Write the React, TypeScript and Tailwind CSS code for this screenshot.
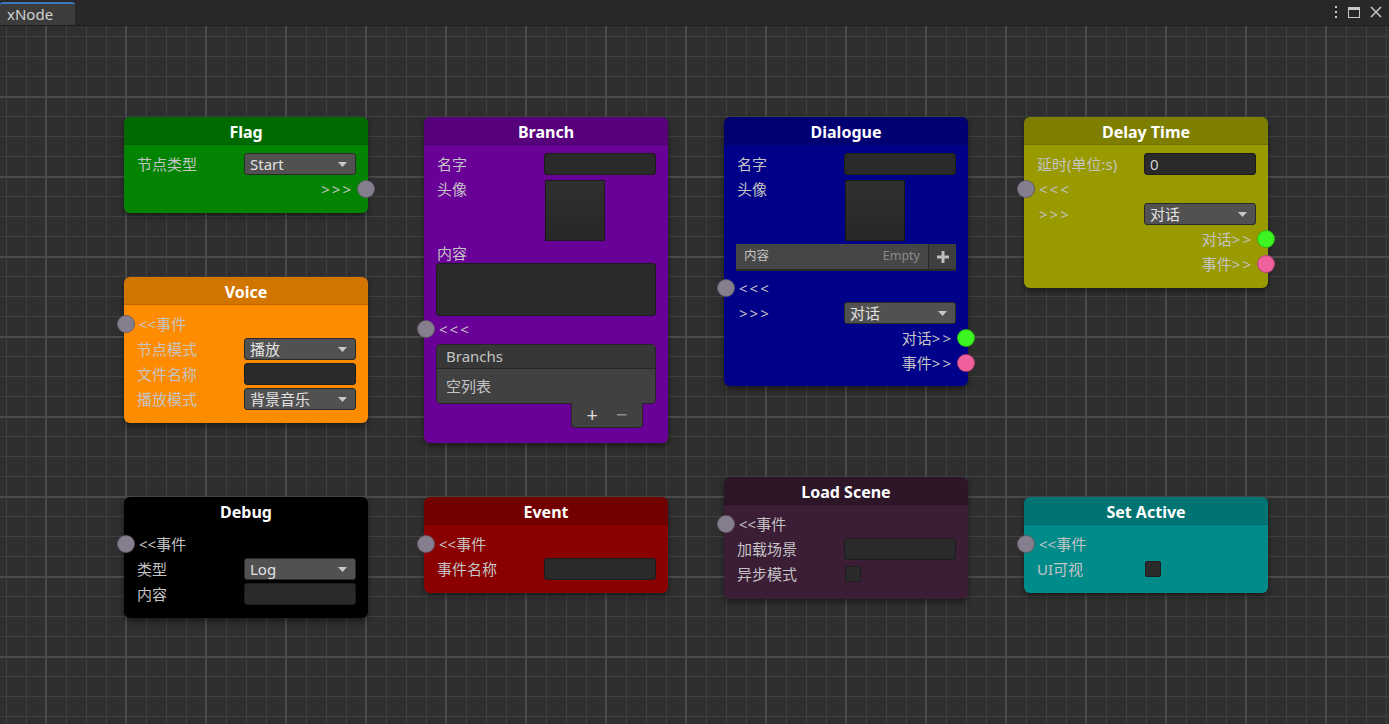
import type { ReactNode } from "react";

const FONT = "font-['Noto_Sans','Noto_Sans_CJK_SC',sans-serif]";

function Port({ side, color = "bg-[#857e8f]" }: { side: "left" | "right"; color?: string }) {
  return (
    <span
      className={`absolute top-1/2 -translate-y-1/2 w-[18px] h-[18px] rounded-full border border-black/25 ${color} ${
        side === "left" ? "left-[-7px]" : "right-[-7px]"
      }`}
    />
  );
}

function Row({ children, className = "" }: { children: ReactNode; className?: string }) {
  return <div className={`relative h-[22px] flex items-center pl-[13px] pr-[12px] ${className}`}>{children}</div>;
}

function Label({ children }: { children: ReactNode }) {
  return <span className="flex-1 text-[15px] leading-none text-[#c4c4c4] whitespace-nowrap">{children}</span>;
}

function Field({ value }: { value?: string }) {
  return (
    <div className="w-[112px] h-[22px] rounded-[3px] bg-[#2a2a2a] border border-[#1d1d1d] flex items-center pl-[5px] text-[15px] leading-none text-[#d2d2d2]">
      {value}
    </div>
  );
}

function Dropdown({ value }: { value: string }) {
  return (
    <div className="w-[112px] h-[22px] rounded-[3px] bg-[#515151] border border-[#2a2a2a] flex items-center pl-[5px] pr-[8px] text-[15px] leading-none text-[#e2e2e2]">
      <span className="flex-1">{value}</span>
      <svg width="9" height="5" viewBox="0 0 9 5">
        <path d="M0 0h9L4.5 5z" fill="#c8c8c8" />
      </svg>
    </div>
  );
}

function Check() {
  return <div className="w-[16px] h-[16px] ml-[1px] rounded-[2px] bg-[#2a2a2a] border border-[#1d1d1d]" />;
}

function Avatar() {
  return <div className="w-[60px] h-[61px] ml-[1px] mt-[2px] self-start bg-[linear-gradient(to_bottom,#303030,#272727)] border border-black/40" />;
}

function Value({ children }: { children: ReactNode }) {
  return <div className="w-[112px] flex">{children}</div>;
}

function InPort({ text, className = "" }: { text: ReactNode; className?: string }) {
  return (
    <Row className={`pl-[15px] ${className}`}>
      <Port side="left" />
      <Label>{text}</Label>
    </Row>
  );
}

function OutPort({ text, color }: { text: string; color?: string }) {
  return (
    <Row className="justify-end pr-[15px]">
      <span className="text-[15px] leading-none text-[#c4c4c4] whitespace-nowrap">
        {text}
        <span className="tracking-[2px]">{">>"}</span>
      </span>
      <Port side="right" color={color} />
    </Row>
  );
}

function Node({
  pos,
  title,
  head,
  body,
  pb = "pb-[13px]",
  children,
}: {
  pos: string;
  title: string;
  head: string;
  body: string;
  pb?: string;
  children: ReactNode;
}) {
  return (
    <div className={`absolute w-[244px] rounded-[6px] shadow-[0_3px_6px_rgba(0,0,0,0.45)] ${pos}`}>
      <div className={`h-[28px] pt-[3px] rounded-t-[6px] flex items-center justify-center text-[16px] leading-none font-bold text-white border-b border-black/10 ${head}`}>
        {title}
      </div>
      <div className={`rounded-b-[6px] pt-[8px] flex flex-col gap-[3px] ${pb} ${body}`}>{children}</div>
    </div>
  );
}

const GREEN = "bg-[#3df520]";
const PINK = "bg-[#f0609c]";
const ARR3 = <span className="tracking-[2px]">{">>>"}</span>;
const ARL3 = <span className="tracking-[2px]">{"<<<"}</span>;

export default function App() {
  return (
    <div className={`w-[1389px] h-[724px] flex flex-col bg-[#282828] overflow-hidden ${FONT}`}>
      <div className="h-[26px] flex items-end bg-[#282828] border-b border-[#1e1e1e]">
        <div className="h-[23px] w-[75px] bg-[#3c3c3c] border-t-2 border-[#3a78c0] rounded-t-[3px] px-[7px] flex items-center text-[15px] text-[#d2d2d2]">
          xNode
        </div>
        <div className="ml-auto h-[26px] flex items-center gap-[10px] pr-[7px]">
          <svg width="4" height="12" viewBox="0 0 4 12">
            <rect x="1" y="0" width="2" height="2" fill="#c8c8c8" />
            <rect x="1" y="5" width="2" height="2" fill="#c8c8c8" />
            <rect x="1" y="10" width="2" height="2" fill="#c8c8c8" />
          </svg>
          <svg width="12" height="11" viewBox="0 0 12 11">
            <rect x="0.5" y="0.5" width="11" height="10" fill="none" stroke="#c8c8c8" />
            <rect x="0.5" y="0.5" width="11" height="2.5" fill="#c8c8c8" />
          </svg>
          <svg width="12" height="12" viewBox="0 0 12 12">
            <path d="M1 1l10 10M11 1L1 11" stroke="#c8c8c8" strokeWidth="1.5" />
          </svg>
        </div>
      </div>

      <div className="relative flex-1 bg-[#2f2f2f] bg-[image:linear-gradient(to_right,#4a4a4a_2px,transparent_2px),linear-gradient(to_bottom,#4a4a4a_2px,transparent_2px),linear-gradient(to_right,#404040_1px,transparent_1px),linear-gradient(to_bottom,#404040_1px,transparent_1px)] bg-[size:80px_80px,80px_80px,20px_20px,20px_20px] bg-[position:45px_70px,45px_70px,6px_10px,6px_10px]">
        {/* column 1 */}
        <Node pos="left-[124px] top-[91px]" title="Flag" head="bg-[#006900]" body="bg-[#028402]">
          <Row>
            <Label>节点类型</Label>
            <Dropdown value="Start" />
          </Row>
          <Row className="justify-end pr-[15px]">
            <span className="text-[15px] leading-none text-[#c4c4c4]">{ARR3}</span>
            <Port side="right" />
          </Row>
        </Node>

        <Node pos="left-[124px] top-[251px]" title="Voice" head="bg-[#d27400]" body="bg-[#ff8c00]">
          <InPort text="<<事件" />
          <Row>
            <Label>节点模式</Label>
            <Dropdown value="播放" />
          </Row>
          <Row>
            <Label>文件名称</Label>
            <Field />
          </Row>
          <Row>
            <Label>播放模式</Label>
            <Dropdown value="背景音乐" />
          </Row>
        </Node>

        <Node pos="left-[124px] top-[471px]" title="Debug" head="bg-[#000000]" body="bg-[#000000]">
          <InPort text="<<事件" />
          <Row>
            <Label>类型</Label>
            <Dropdown value="Log" />
          </Row>
          <Row>
            <Label>内容</Label>
            <Field />
          </Row>
        </Node>

        {/* column 2 */}
        <Node pos="left-[424px] top-[91px]" title="Branch" head="bg-[#56007b]" body="bg-[#690098]" pb="pb-[15px]">
          <Row>
            <Label>名字</Label>
            <Field />
          </Row>
          <div className="relative h-[63px] flex pl-[13px] pr-[12px]">
            <span className="flex-1 text-[15px] leading-[22px] text-[#c4c4c4]">头像</span>
            <Value>
              <Avatar />
            </Value>
          </div>
          <div className="h-[20px] -mt-[1px] flex items-center pl-[13px] text-[15px] leading-none text-[#c4c4c4]">内容</div>
          <div className="mx-[12px] -mt-[3px] h-[53px] rounded-[3px] bg-[#2a2a2a] border border-[#1d1d1d]" />
          <InPort text={ARL3} className="-mt-[1px]" />
          <div className="mx-[12px] mt-[1px] flex flex-col">
            <div className="h-[60px] rounded-[4px] border border-[#262626] overflow-hidden flex flex-col">
              <div className="h-[24px] bg-[#373737] border-b border-[#262626] flex items-center pl-[9px] text-[15px] leading-none text-[#c4c4c4]">
                Branchs
              </div>
              <div className="flex-1 bg-[#414141] flex items-center pl-[9px] text-[15px] leading-none text-[#c4c4c4]">
                空列表
              </div>
            </div>
            <div className="self-end mr-[13px] -mt-[1px] w-[72px] h-[25px] rounded-b-[4px] bg-[#414141] border border-t-0 border-[#262626] flex items-center justify-center gap-[18px]">
              <span className="text-[20px] leading-none text-[#dcdcdc]">+</span>
              <span className="text-[20px] leading-none text-[#8c8c8c]">−</span>
            </div>
          </div>
        </Node>

        <Node pos="left-[424px] top-[471px]" title="Event" head="bg-[#720000]" body="bg-[#8b0000]">
          <InPort text="<<事件" />
          <Row>
            <Label>事件名称</Label>
            <Field />
          </Row>
        </Node>

        {/* column 3 */}
        <Node pos="left-[724px] top-[91px]" title="Dialogue" head="bg-[#000072]" body="bg-[#000088]" pb="pb-[12px]">
          <Row>
            <Label>名字</Label>
            <Field />
          </Row>
          <div className="relative h-[63px] flex pl-[13px] pr-[12px]">
            <span className="flex-1 text-[15px] leading-[22px] text-[#c4c4c4]">头像</span>
            <Value>
              <Avatar />
            </Value>
          </div>
          <div className="mx-[12px] h-[27px] flex bg-[#464646] border-b-2 border-[#2a2a2a]">
            <span className="flex-1 flex items-center pl-[8px] text-[12.5px] leading-none text-[#c4c4c4]">内容</span>
            <span className="flex items-center pr-[8px] text-[12.5px] leading-none text-[#8a8a8a]">Empty</span>
            <span className="w-[28px] flex items-center justify-center bg-[#3f3f3f] border-l border-[#2a2a2a]">
              <svg width="12" height="12" viewBox="0 0 12 12">
                <path d="M6 0v12M0 6h12" stroke="#bdbdbd" strokeWidth="3" />
              </svg>
            </span>
          </div>
          <InPort text={ARL3} className="mt-[3px]" />
          <Row className="pl-[15px]">
            <Label>{ARR3}</Label>
            <Dropdown value="对话" />
          </Row>
          <OutPort text="对话" color={GREEN} />
          <OutPort text="事件" color={PINK} />
        </Node>

        <Node pos="left-[724px] top-[451px]" title="Load Scene" head="bg-[#2e1629]" body="bg-[#3b1d36]" pb="pb-[14px]">
          <InPort text="<<事件" />
          <Row>
            <Label>加载场景</Label>
            <Field />
          </Row>
          <Row>
            <Label>异步模式</Label>
            <Value>
              <Check />
            </Value>
          </Row>
        </Node>

        {/* column 4 */}
        <Node pos="left-[1024px] top-[91px]" title="Delay Time" head="bg-[#7e7e00]" body="bg-[#999900]">
          <Row>
            <Label>延时(单位:s)</Label>
            <Field value="0" />
          </Row>
          <InPort text={ARL3} />
          <Row className="pl-[15px]">
            <Label>{ARR3}</Label>
            <Dropdown value="对话" />
          </Row>
          <OutPort text="对话" color={GREEN} />
          <OutPort text="事件" color={PINK} />
        </Node>

        <Node pos="left-[1024px] top-[471px]" title="Set Active" head="bg-[#007373]" body="bg-[#008b8b]">
          <InPort text="<<事件" />
          <Row>
            <Label>UI可视</Label>
            <Value>
              <Check />
            </Value>
          </Row>
        </Node>
      </div>
    </div>
  );
}
